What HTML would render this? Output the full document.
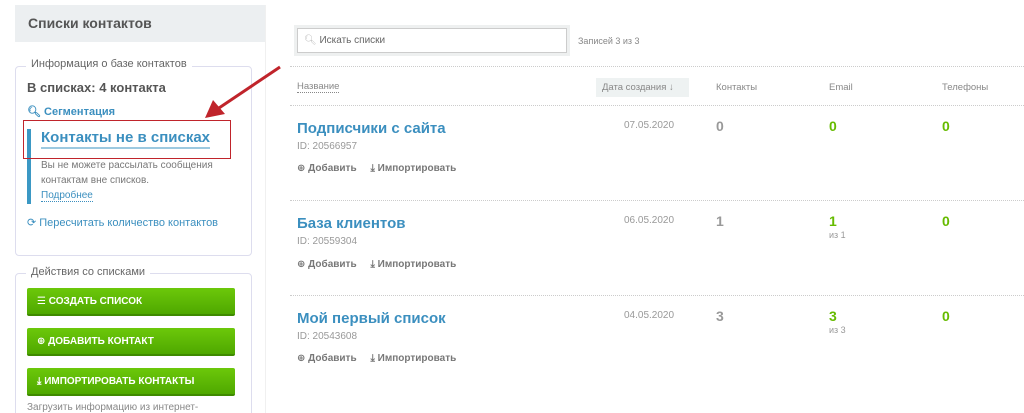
<!DOCTYPE html><html><head><meta charset="utf-8"><style>
html,body{margin:0;width:1024px;height:413px;overflow:hidden;background:#fff;font-family:"Liberation Sans","DejaVu Sans",sans-serif;position:relative;color:#555}
.a{position:absolute;white-space:nowrap}
.dl{position:absolute;left:290px;right:0;border-top:1px dotted #ccc;height:0}
.btn{position:absolute;left:27px;width:208px;height:28px;background:linear-gradient(#6cc80a,#4fa800);border-bottom:2px solid #3f8a00;box-sizing:border-box;color:#fff;font-weight:bold;font-size:10px;line-height:28px;padding-left:10px;border-radius:2px}
.t{color:#3b8fbf;font-weight:bold;font-size:15px}
.id{color:#999;font-size:10px}
.act{color:#777;font-size:10px;font-weight:bold}
.g{color:#66bb00;font-weight:bold;font-size:14px}
.n{color:#999;font-weight:bold;font-size:14px}
.d{color:#999;font-size:10px}
</style></head><body>
<div class="a" style="left:15px;top:5px;width:250px;height:408px;background:#fff;border-right:1px solid #f0f0f0"></div>
<div class="a" style="left:15px;top:5px;width:250px;height:37px;background:#eceff1"></div>
<div class="a" style="left:28px;top:15px;font-size:14px;font-weight:bold;color:#555">Списки контактов</div>
<div class="a" style="left:15px;top:66px;width:235px;height:188px;border:1px solid #dde;border-radius:4px;background:#fff"></div>
<div class="a" style="left:26px;top:58px;padding:0 5px;font-size:11px;color:#666;background:#fff">Информация о базе контактов</div>
<div class="a" style="left:27px;top:80px;font-size:13px;font-weight:bold;color:#555">В списках: 4 контакта</div>
<div class="a" style="left:27px;top:105px;font-size:11px;font-weight:bold;color:#3b8fbf">&#x1F50D;&#xFE0E; Сегментация</div>
<div class="a" style="left:27px;top:129px;width:4px;height:75px;background:#3b98c4"></div>
<div class="a" style="left:41px;top:129px;font-size:15px;font-weight:bold;color:#3b8fbf;border-bottom:2px solid #9cc9e0;line-height:18px">Контакты не в списках</div>
<div class="a" style="left:23px;top:120px;width:206px;height:37px;border:1px solid #c0242b"></div>
<div class="a" style="left:41px;top:158px;font-size:10px;color:#777;line-height:15px">Вы не можете рассылать сообщения<br>контактам вне списков.<br><span style="color:#3b8fbf;border-bottom:1px dotted #3b8fbf">Подробнее</span></div>
<div class="a" style="left:27px;top:216px;font-size:11px;color:#3b8fbf">⟳ Пересчитать количество контактов</div>
<svg class="a" style="left:200px;top:62px" width="85" height="62"><line x1="80" y1="5" x2="16" y2="48" stroke="#c0242b" stroke-width="3"/><polygon points="5,56 13,38 25,52" fill="#c0242b"/></svg>
<div class="a" style="left:15px;top:273px;width:235px;height:150px;border:1px solid #dde;border-radius:4px;background:#fff"></div>
<div class="a" style="left:26px;top:266px;padding:0 5px;font-size:11px;color:#666;background:#fff">Действия со списками</div>
<div class="btn" style="top:288px">☰ СОЗДАТЬ СПИСОК</div>
<div class="btn" style="top:328px">⊕ ДОБАВИТЬ КОНТАКТ</div>
<div class="btn" style="top:368px">⤓ ИМПОРТИРОВАТЬ КОНТАКТЫ</div>
<div class="a" style="left:27px;top:402px;font-size:10px;color:#888">Загрузить информацию из интернет-</div>

<div class="a" style="left:294px;top:25px;width:276px;height:31px;background:#eef0f0"></div>
<div class="a" style="left:297px;top:28px;width:268px;height:23px;background:#fff;border:1px solid #ccc"></div>
<div class="a" style="left:304px;top:35px;font-size:10px;color:#666"><span style="color:#bbb">&#x1F50D;&#xFE0E;</span> Искать списки</div>
<div class="a" style="left:578px;top:36px;font-size:9px;color:#888">Записей 3 из 3</div>
<div class="dl" style="top:66px"></div>
<div class="dl" style="top:105px"></div>
<div class="dl" style="top:200px"></div>
<div class="dl" style="top:295px"></div>
<div class="a" style="left:297px;top:81px;font-size:9.5px;color:#888;border-bottom:1px dotted #888">Название</div>
<div class="a" style="left:596px;top:78px;width:93px;height:19px;background:#eef2f2"></div>
<div class="a" style="left:602px;top:82px;font-size:9.5px;color:#888">Дата создания ↓</div>
<div class="a" style="left:716px;top:82px;font-size:9.5px;color:#888">Контакты</div>
<div class="a" style="left:829px;top:82px;font-size:9.5px;color:#888">Email</div>
<div class="a" style="left:942px;top:82px;font-size:9.5px;color:#888">Телефоны</div>

<div class="a t" style="left:297px;top:120px">Подписчики с сайта</div>
<div class="a id" style="left:297px;top:141px">ID: 20566957</div>
<div class="a act" style="left:297px;top:163px">⊕ Добавить &nbsp;&nbsp;&nbsp; ⤓ Импортировать</div>
<div class="a d" style="left:624px;top:120px">07.05.2020</div>
<div class="a n" style="left:716px;top:118px">0</div>
<div class="a g" style="left:829px;top:118px">0</div>
<div class="a g" style="left:942px;top:118px">0</div>

<div class="a t" style="left:297px;top:215px">База клиентов</div>
<div class="a id" style="left:297px;top:236px">ID: 20559304</div>
<div class="a act" style="left:297px;top:259px">⊕ Добавить &nbsp;&nbsp;&nbsp; ⤓ Импортировать</div>
<div class="a d" style="left:624px;top:215px">06.05.2020</div>
<div class="a n" style="left:716px;top:213px">1</div>
<div class="a g" style="left:829px;top:213px">1</div>
<div class="a d" style="left:829px;top:230px;font-size:9px">из 1</div>
<div class="a g" style="left:942px;top:213px">0</div>

<div class="a t" style="left:297px;top:310px">Мой первый список</div>
<div class="a id" style="left:297px;top:331px">ID: 20543608</div>
<div class="a act" style="left:297px;top:353px">⊕ Добавить &nbsp;&nbsp;&nbsp; ⤓ Импортировать</div>
<div class="a d" style="left:624px;top:310px">04.05.2020</div>
<div class="a n" style="left:716px;top:308px">3</div>
<div class="a g" style="left:829px;top:308px">3</div>
<div class="a d" style="left:829px;top:325px;font-size:9px">из 3</div>
<div class="a g" style="left:942px;top:308px">0</div>
</body></html>
